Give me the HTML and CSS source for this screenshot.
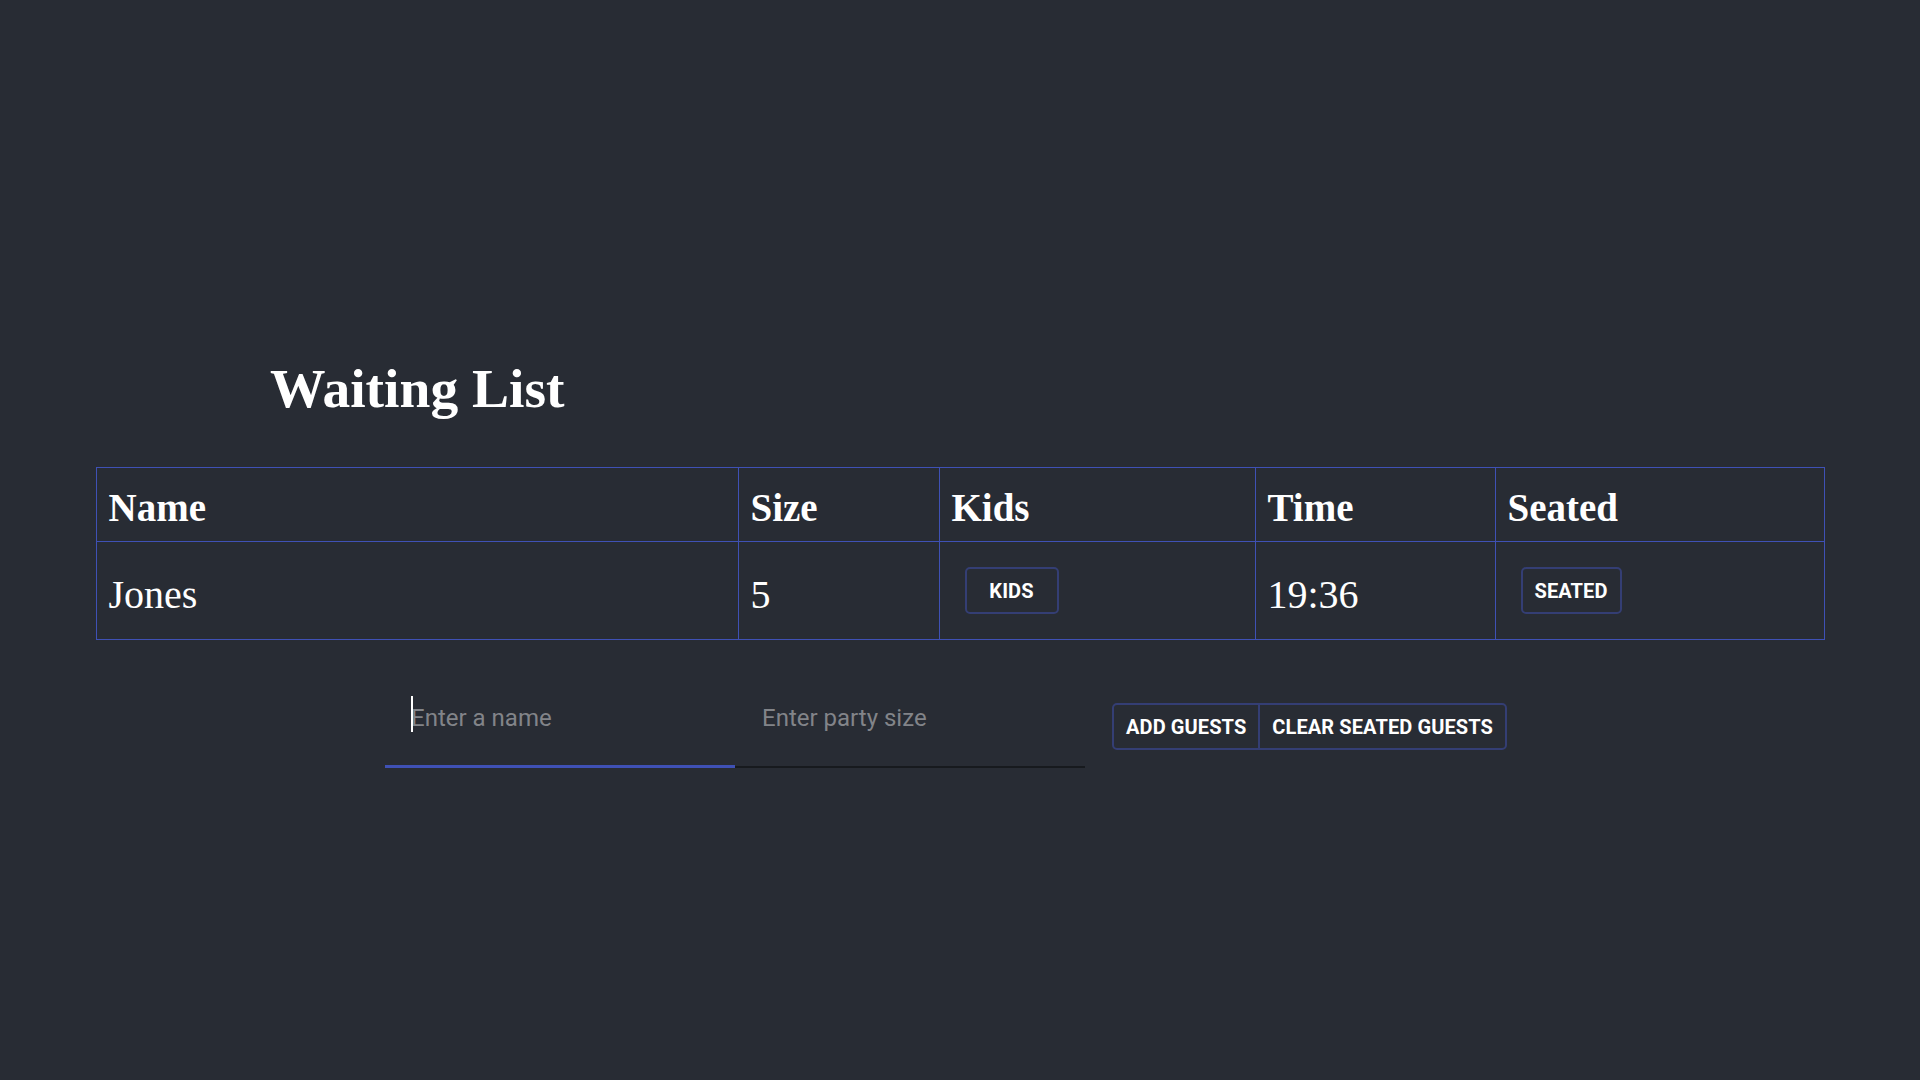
FILE: index.html
```html
<!DOCTYPE html>
<html lang="en">
<head>
<meta charset="utf-8">
<title>Waiting List</title>
<link rel="stylesheet" href="styles.css">
</head>
<body>
<main class="app">
  <h1 class="title">Waiting List</h1>
  <table class="wait-table">
    <colgroup>
      <col class="c-name">
      <col class="c-size">
      <col class="c-kids">
      <col class="c-time">
      <col class="c-seated">
    </colgroup>
    <thead>
      <tr>
        <th>Name</th>
        <th>Size</th>
        <th>Kids</th>
        <th>Time</th>
        <th>Seated</th>
      </tr>
    </thead>
    <tbody>
      <tr>
        <td class="txt">Jones</td>
        <td class="txt">5</td>
        <td class="ctl"><button class="btn btn-cell">Kids</button></td>
        <td class="txt">19:36</td>
        <td class="ctl"><button class="btn btn-cell">Seated</button></td>
      </tr>
    </tbody>
  </table>
  <div class="form-row">
    <div class="inputs">
      <label class="field focused">
        <span class="caret"></span>
        <input class="field-input" type="text" placeholder="Enter a name">
      </label>
      <label class="field">
        <input class="field-input" type="text" placeholder="Enter party size">
      </label>
    </div>
    <div class="btn-group">
      <button class="btn btn-g">Add Guests</button>
      <button class="btn btn-g btn-g-last">Clear Seated Guests</button>
    </div>
  </div>
</main>
</body>
</html>
```
FILE: styles.css
```css
html, body {
  margin: 0;
  padding: 0;
  background: #282c34;
  min-height: 100%;
}

.app {
  min-height: 1080px;
  box-sizing: border-box;
  padding-top: 358px;
  color: #ffffff;
}

.title {
  margin: 0 0 47px 0;
  padding-left: 270px;
  font-family: "Liberation Serif", "Times New Roman", serif;
  font-weight: 700;
  font-size: 55.5px;
  line-height: 62px;
  color: #ffffff;
}

.wait-table {
  width: 1728px;
  margin: 0 auto;
  border-collapse: collapse;
  table-layout: fixed;
  border: 1px solid #3f51b5;
  font-family: "Liberation Serif", "Times New Roman", serif;
  color: #ffffff;
}

.c-name { width: 642px; }
.c-size { width: 201px; }
.c-kids { width: 316px; }
.c-time { width: 240px; }
.c-seated { width: 329px; }

.wait-table th,
.wait-table td {
  border: 1px solid #3f51b5;
  text-align: left;
  vertical-align: middle;
  padding: 0 12px;
}

.wait-table th {
  height: 74px;
  font-size: 39px;
  font-weight: 700;
  line-height: 48px;
  padding-top: 6px;
  box-sizing: border-box;
}

.wait-table td {
  height: 98px;
  font-size: 40px;
  font-weight: 400;
  line-height: 48px;
  box-sizing: border-box;
}

.wait-table td.txt {
  padding-top: 8px;
}

.wait-table td.ctl {
  line-height: 0;
}

.btn {
  font-family: Roboto, "Liberation Sans", sans-serif;
  font-weight: 700;
  font-size: 20px;
  letter-spacing: 0.1px;
  text-transform: uppercase;
  color: #ffffff;
  background: transparent;
  cursor: pointer;
  padding: 0 12px;
  margin: 0;
  line-height: 1;
}

.btn-cell {
  display: block;
  height: 47px;
  min-width: 94px;
  margin-left: 13px;
  border: 2px solid #343e74;
  border-radius: 5px;
}

.form-row {
  display: flex;
  align-items: flex-start;
  margin-top: 41px;
  margin-left: 385px;
}

.inputs {
  display: flex;
}

.field {
  position: relative;
  display: block;
  width: 350px;
  height: 87px;
  box-sizing: border-box;
  padding: 19px 0 0 27px;
  border-bottom: 2px solid #171a1e;
}

.field.focused {
  border-bottom: 3px solid #3f51b5;
  padding-left: 26px;
}

.field-input {
  display: block;
  width: 100%;
  height: 36px;
  box-sizing: border-box;
  border: 0;
  outline: none;
  background: transparent;
  padding: 0;
  margin: 0;
  font-family: Roboto, "Liberation Sans", sans-serif;
  font-size: 24px;
  line-height: 36px;
  color: #ffffff;
}

.field-input::placeholder {
  color: #828489;
  opacity: 1;
}

.caret {
  position: absolute;
  left: 26px;
  top: 15px;
  width: 2px;
  height: 36px;
  background: #ffffff;
}

.btn-group {
  display: flex;
  margin-top: 22px;
  margin-left: 27px;
  border: 2px solid #343e74;
  border-radius: 5px;
  height: 47px;
  box-sizing: border-box;
}

.btn-g {
  height: 43px;
  border: 0;
}

.btn-g-last {
  border-left: 2px solid #343e74;
}
```
